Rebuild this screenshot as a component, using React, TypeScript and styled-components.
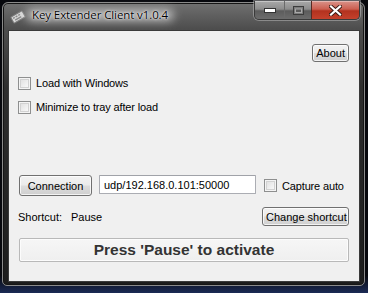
import React, { useState } from 'react';
import styled, { createGlobalStyle } from 'styled-components';

const GlobalStyle = createGlobalStyle`
  html, body {
    margin: 0;
    padding: 0;
    background: #05060b;
  }
`;

const Desktop = styled.div`
  width: 368px;
  height: 293px;
  box-sizing: border-box;
  padding: 2px 3px 0 2px;
  overflow: hidden;
  background: linear-gradient(180deg, #07080d 0%, #07080d 94%, #1b2a55 100%);
`;

const Frame = styled.div`
  width: 363px;
  height: 284px;
  box-sizing: border-box;
  border: 1px solid #8a8a8a;
  border-radius: 6px 6px 5px 5px;
  background: linear-gradient(180deg, #707070 0%, #4e4e4e 9%, #2e2e2e 30%, #1c1c1c 100%);
  box-shadow: inset 0 0 0 1px #151515;
  display: flex;
  flex-direction: column;
  padding: 0 4px 3px 5px;
`;

const TitleBar = styled.div`
  height: 27px;
  display: flex;
  align-items: flex-start;
  flex-shrink: 0;
`;

const AppIcon = styled.svg`
  width: 16px;
  height: 16px;
  margin: 6px 6px 0 2px;
  flex-shrink: 0;
`;

const CaptionArea = styled.div`
  flex: 1;
  display: flex;
`;

const Caption = styled.div`
  position: relative;
  font-family: 'Open Sans', 'Noto Sans', sans-serif;
  font-size: 11.5px;
  color: #000;
  margin-top: 4px;
  letter-spacing: -0.1px;
  text-shadow: 0 0 3px rgba(255, 255, 255, 0.9), 0 0 1px #fff;

  &::before {
    content: '';
    position: absolute;
    left: -6px;
    right: -6px;
    top: 2px;
    bottom: 1px;
    border-radius: 8px;
    background: rgba(220, 220, 220, 0.75);
    filter: blur(5px);
  }

  span {
    position: relative;
  }
`;

const CaptionButtons = styled.div`
  display: flex;
  margin-top: -2px;
  border: 1px solid #3a3a3a;
  border-top: none;
  border-radius: 0 0 5px 5px;
  overflow: hidden;
  box-shadow: 0 0 0 1px rgba(200, 200, 200, 0.45);
`;

const CapButton = styled.div<{ $w: number; $close?: boolean }>`
  width: ${p => p.$w}px;
  height: 18px;
  display: flex;
  align-items: center;
  justify-content: center;
  border-left: ${p => (p.$close ? '1px solid #5a2a22' : '1px solid #6a6a6a')};
  box-shadow: inset 0 1px 0 rgba(255, 255, 255, 0.35);
  background: ${p =>
    p.$close
      ? 'linear-gradient(180deg, #d9938a 0%, #cc5f50 45%, #b3321f 55%, #c4412c 100%)'
      : 'linear-gradient(180deg, #a9a9a9 0%, #8c8c8c 45%, #5c5c5c 55%, #6c6c6c 100%)'};
  &:first-child {
    border-left: none;
  }
`;

const Client = styled.div`
  flex: 1;
  background: #f0f0f0;
  border: 1px solid #3a3a3a;
  box-sizing: border-box;
  display: flex;
  flex-direction: column;
  padding: 13px 10px 0 9px;
  font-family: 'Liberation Sans', Arial, sans-serif;
  font-size: 11px;
  color: #000;
`;

const TopRow = styled.div`
  display: flex;
  justify-content: flex-end;
`;

const Button = styled.button<{ $w?: number; $h?: number }>`
  font-family: 'Liberation Sans', Arial, sans-serif;
  font-size: 11px;
  color: #000;
  width: ${p => (p.$w ? `${p.$w}px` : 'auto')};
  height: ${p => p.$h ?? 21}px;
  padding: 0 3px;
  border: 1px solid #707070;
  border-radius: 3px;
  background: linear-gradient(180deg, #f2f2f2 0%, #ebebeb 49%, #dddddd 51%, #cfcfcf 100%);
  box-shadow: inset 0 0 0 1px rgba(255, 255, 255, 0.75);
  cursor: pointer;
  white-space: nowrap;
`;

const BigButton = styled.button`
  width: 330px;
  height: 24px;
  margin: 12px 0 0 1px;
  font-family: 'Liberation Sans', Arial, sans-serif;
  font-weight: bold;
  font-size: 15.5px;
  color: #333;
  border: 1px solid #b9b9b9;
  border-radius: 2px;
  background: linear-gradient(180deg, #f6f6f6 0%, #efefef 100%);
  box-shadow: inset 0 0 0 1px #fcfcfc;
  cursor: pointer;
`;

const CheckRow = styled.label<{ $top: number }>`
  display: flex;
  align-items: center;
  gap: 5px;
  height: 16px;
  margin-top: ${p => p.$top}px;
  letter-spacing: -0.15px;
  cursor: default;
`;

const Box = styled.span<{ $on: boolean }>`
  width: 13px;
  height: 13px;
  box-sizing: border-box;
  border: 1px solid #8e8f8f;
  background: linear-gradient(135deg, #dcdcdc 0%, #f4f4f4 70%, #fbfbfb 100%);
  box-shadow: inset 0 0 0 1px #f4f4f4, inset 0 0 0 2px #d2d2d2;
  flex-shrink: 0;
  display: flex;
  align-items: center;
  justify-content: center;
  font-size: 10px;
  color: #1a3a8a;
  line-height: 1;
`;

const ConnRow = styled.div`
  display: flex;
  align-items: center;
  margin-top: 60px;
  padding-left: 1px;
`;

const AddressInput = styled.input`
  width: 157px;
  height: 19px;
  box-sizing: border-box;
  margin: 0 8px 0 7px;
  padding: 0 4px;
  font-family: 'Liberation Sans', Arial, sans-serif;
  font-size: 11px;
  color: #000;
  background: #fff;
  border: 1px solid #abadb3;
  border-top-color: #a0a2a8;
  border-radius: 1px;
  outline: none;
  align-self: flex-start;
`;

const ShortcutRow = styled.div`
  display: flex;
  align-items: center;
  margin-top: 11px;
`;

const ShortcutLabel = styled.span`
  width: 53px;
`;

const ShortcutValue = styled.span`
  flex: 1;
`;

const Check: React.FC<{ label: string; top?: number }> = ({ label, top = 0 }) => {
  const [on, setOn] = useState(false);
  return (
    <CheckRow $top={top} onClick={() => setOn(!on)}>
      <Box $on={on}>{on ? '✓' : ''}</Box>
      <span>{label}</span>
    </CheckRow>
  );
};

const App: React.FC = () => {
  const [address, setAddress] = useState('udp/192.168.0.101:50000');

  return (
    <Desktop>
      <GlobalStyle />
      <Frame>
        <TitleBar>
          <AppIcon viewBox="0 0 16 16">
            <g transform="rotate(-30 8 8)">
              <rect x="1.5" y="4.5" width="13" height="7" rx="1" fill="#d8d8d8" stroke="#7a7a7a" />
              <rect x="3" y="6" width="2" height="1.5" fill="#8a8a8a" />
              <rect x="6" y="6" width="2" height="1.5" fill="#8a8a8a" />
              <rect x="9" y="6" width="2" height="1.5" fill="#8a8a8a" />
              <rect x="4" y="8.5" width="7" height="1.5" fill="#8a8a8a" />
            </g>
          </AppIcon>
          <CaptionArea>
            <Caption>
              <span>Key Extender Client v1.0.4</span>
            </Caption>
          </CaptionArea>
          <CaptionButtons>
            <CapButton $w={29}>
              <svg width="12" height="5" viewBox="0 0 12 5">
                <rect x="0.5" y="0.5" width="11" height="4" fill="#fff" stroke="#333" />
              </svg>
            </CapButton>
            <CapButton $w={26}>
              <svg width="11" height="9" viewBox="0 0 11 9">
                <rect x="0.5" y="0.5" width="10" height="8" fill="#7c7c7c" stroke="#3c3c3c" />
                <rect x="2.5" y="3" width="6" height="3.5" fill="#5a5a5a" stroke="#a8a8a8" />
              </svg>
            </CapButton>
            <CapButton $w={47} $close>
              <svg width="13" height="11" viewBox="0 0 13 11">
                <path d="M2 1.5 L11 9.5 M11 1.5 L2 9.5" stroke="#3a1a14" strokeWidth="4" strokeLinecap="square" />
                <path d="M2 1.5 L11 9.5 M11 1.5 L2 9.5" stroke="#fff" strokeWidth="2.2" strokeLinecap="square" />
              </svg>
            </CapButton>
          </CaptionButtons>
        </TitleBar>
        <Client>
          <TopRow>
            <Button $h={18}>About</Button>
          </TopRow>
          <Check label="Load with Windows" top={13} />
          <Check label="Minimize to tray after load" top={8} />
          <ConnRow>
            <Button $w={73}>Connection</Button>
            <AddressInput value={address} onChange={e => setAddress(e.target.value)} />
            <Check label="Capture auto" />
          </ConnRow>
          <ShortcutRow>
            <ShortcutLabel>Shortcut:</ShortcutLabel>
            <ShortcutValue>Pause</ShortcutValue>
            <Button $h={19} $w={87}>Change shortcut</Button>
          </ShortcutRow>
          <BigButton>Press 'Pause' to activate</BigButton>
        </Client>
      </Frame>
    </Desktop>
  );
};

export default App;
